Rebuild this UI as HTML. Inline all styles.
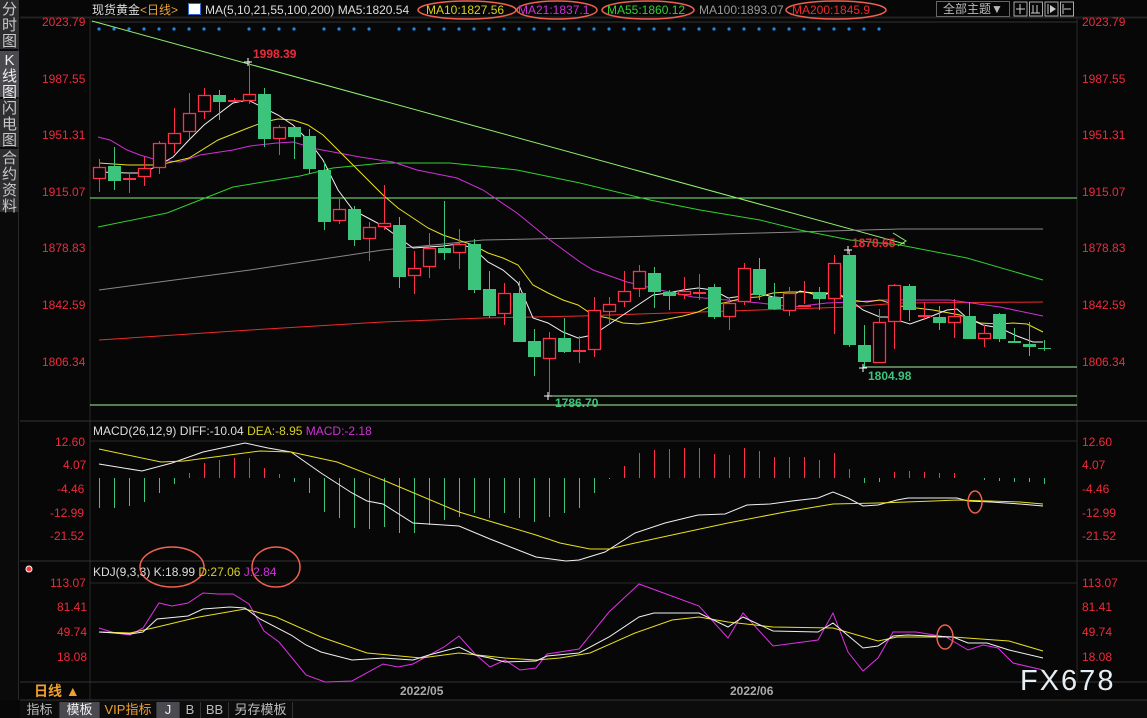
<!DOCTYPE html>
<html><head><meta charset="utf-8"><style>
*{margin:0;padding:0;box-sizing:border-box}
body{width:1147px;height:718px;background:#070707;overflow:hidden;position:relative;font-family:"Liberation Sans","Noto Sans CJK SC",sans-serif}
.side{position:absolute;left:0;top:0;width:19px;height:700px;background:#0a0a0a;border-right:1px solid #2a2a2a}
.seg{position:absolute;left:0;width:19px;background:#2e2e31;color:#c8c8c8;font-size:15px;line-height:16px;text-align:center;padding-top:2px}
.t{position:absolute;white-space:nowrap;font-size:12px;line-height:14px}
.ax{position:absolute;font-size:12px;color:#ee2a3c;line-height:14px}
.tab{position:absolute;top:702px;height:16px;font-size:13px;line-height:16px;color:#bbb;text-align:center;border-right:1px solid #333}
</style></head><body>
<div class="side">
<div class="seg" style="top:0;height:49px">分<br>时<br>图</div>
<div class="seg" style="top:51px;height:46px;background:#4a4a4e;color:#eee">K<br>线<br>图</div>
<div class="seg" style="top:99px;height:48px">闪<br>电<br>图</div>
<div class="seg" style="top:149px;height:63px">合<br>约<br>资<br>料</div>
</div>
<svg id="s" width="1147" height="718" style="position:absolute;left:0;top:0" xmlns="http://www.w3.org/2000/svg"></svg>

<div class="t" style="left:92px;top:3px;color:#ddd">现货黄金<span style="color:#e8a33a">&lt;日线&gt;</span></div>
<div class="t" style="left:188px;top:3px;width:13px;height:12px;background:#fff;border:1px solid #36c"></div>
<div class="t" style="left:205px;top:3px;color:#ddd">MA(5,10,21,55,100,200) MA5:1820.54</div>
<div class="t" style="left:426px;top:3px;color:#d8d020">MA10:1827.56</div>
<div class="t" style="left:518px;top:3px;color:#d030d8">MA21:1837.1</div>
<div class="t" style="left:607px;top:3px;color:#30d030">MA55:1860.12</div>
<div class="t" style="left:699px;top:3px;color:#999">MA100:1893.07</div>
<div class="t" style="left:792px;top:3px;color:#ee2a2a">MA200:1845.9</div>
<div class="t" style="left:936px;top:1px;width:74px;height:16px;border:1px solid #666;color:#bbb;text-align:center;line-height:14px">全部主题▼</div>

<div class="ax" style="left:1082px;top:15px">2023.79</div>
<div class="ax" style="left:1082px;top:72px">1987.55</div>
<div class="ax" style="left:1082px;top:128px">1951.31</div>
<div class="ax" style="left:1082px;top:185px">1915.07</div>
<div class="ax" style="left:1082px;top:241px">1878.83</div>
<div class="ax" style="left:1082px;top:298px">1842.59</div>
<div class="ax" style="left:1082px;top:355px">1806.34</div>
<div class="ax" style="left:42px;top:15px">2023.79</div>
<div class="ax" style="left:42px;top:72px">1987.55</div>
<div class="ax" style="left:42px;top:128px">1951.31</div>
<div class="ax" style="left:42px;top:185px">1915.07</div>
<div class="ax" style="left:42px;top:241px">1878.83</div>
<div class="ax" style="left:42px;top:298px">1842.59</div>
<div class="ax" style="left:42px;top:355px">1806.34</div>

<div class="ax" style="left:1082px;top:435px">12.60</div>
<div class="ax" style="left:1082px;top:458px">4.07</div>
<div class="ax" style="left:1082px;top:482px">-4.46</div>
<div class="ax" style="left:1082px;top:506px">-12.99</div>
<div class="ax" style="left:1082px;top:529px">-21.52</div>
<div class="ax" style="left:55px;top:435px">12.60</div>
<div class="ax" style="left:63px;top:458px">4.07</div>
<div class="ax" style="left:57px;top:482px">-4.46</div>
<div class="ax" style="left:50px;top:506px">-12.99</div>
<div class="ax" style="left:50px;top:529px">-21.52</div>

<div class="ax" style="left:1082px;top:576px">113.07</div>
<div class="ax" style="left:1082px;top:600px">81.41</div>
<div class="ax" style="left:1082px;top:625px">49.74</div>
<div class="ax" style="left:1082px;top:650px">18.08</div>
<div class="ax" style="left:50px;top:576px">113.07</div>
<div class="ax" style="left:57px;top:600px">81.41</div>
<div class="ax" style="left:57px;top:625px">49.74</div>
<div class="ax" style="left:57px;top:650px">18.08</div>

<div class="t" style="left:93px;top:424px;color:#ddd">MACD(26,12,9) DIFF:-10.04 <span style="color:#d8d020">DEA:-8.95</span> <span style="color:#d030d8">MACD:-2.18</span></div>
<div class="t" style="left:93px;top:565px;color:#ddd">KDJ(9,3,3) K:18.99 <span style="color:#d8d020">D:27.06</span> <span style="color:#d030d8">J:2.84</span></div>

<div class="t" style="left:253px;top:47px;color:#ee2a3c;font-weight:bold">1998.39</div>
<div class="t" style="left:852px;top:236px;color:#ee2a3c;font-weight:bold">1878.65</div>
<div class="t" style="left:868px;top:369px;color:#3cc47c;font-weight:bold">1804.98</div>
<div class="t" style="left:555px;top:396px;color:#3cc47c;font-weight:bold">1786.70</div>

<div class="t" style="left:400px;top:684px;color:#aaa;font-weight:bold">2022/05</div>
<div class="t" style="left:730px;top:684px;color:#aaa;font-weight:bold">2022/06</div>
<div class="t" style="left:34px;top:684px;color:#f0a030;font-size:14px;font-weight:bold">日线 ▲</div>
<div class="t" style="left:1020px;top:665px;color:#e6eef5;font-size:29px;line-height:32px;letter-spacing:2px">FX678</div>

<div class="tab" style="left:20px;width:40px">指标</div>
<div class="tab" style="left:60px;width:40px;background:#4a4a50;color:#eee">模板</div>
<div class="tab" style="left:100px;width:57px;color:#f0a030">VIP指标</div>
<div class="tab" style="left:157px;width:23px;background:#4a4a50;color:#eee">J</div>
<div class="tab" style="left:180px;width:21px">B</div>
<div class="tab" style="left:201px;width:28px">BB</div>
<div class="tab" style="left:229px;width:64px">另存模板</div>

<script>
var s=document.getElementById('s'),h='';
function L(x1,y1,x2,y2,c,w){h+='<line x1="'+x1+'" y1="'+y1+'" x2="'+x2+'" y2="'+y2+'" stroke="'+c+'" stroke-width="'+(w||1)+'"/>';}
function P(pts,c,w){h+='<polyline fill="none" stroke="'+c+'" stroke-width="'+(w||1)+'" points="'+pts+'"/>';}
h+='<rect x="20" y="700" width="1127" height="18" fill="#0c0c0c"/>';
L(90,18,90,700,'#2a2a2a');L(1077,18,1077,682,'#2a2a2a');
L(20,18,1147,18,'#222');L(20,421,1147,421,'#333');L(20,561,1147,561,'#333');L(20,682,1147,682,'#333');L(20,700,1147,700,'#333');L(20,17,1147,17,'#222');
L(90,22,1077,22,'#333');L(90,441,1077,441,'#2a2a2a');L(90,583,1077,583,'#2a2a2a');
for(var i=0;i<4;i++){h+='<rect x="'+(1014+i*15.5)+'" y="2" width="13" height="14" fill="none" stroke="#aaa"/>';}
L(1020,4,1020,14,'#ccc');L(1016,9,1025,9,'#ccc');L(1033,5,1033,13,'#ccc');L(1037,5,1037,13,'#ccc');L(1031,13,1040,13,'#ccc');
L(1048,4,1048,14,'#ccc');h+='<path d="M1050 5 L1056 9 L1050 13Z" fill="#ccc"/>';L(1063,4,1063,14,'#ccc');L(1064,9,1071,9,'#ccc');
for(var i=0;i<53;i++){var x=99+15*i;if(i==9||i==14||i==19)continue;h+='<circle cx="'+x+'" cy="29" r="1.6" fill="#1e88e5"/>';}
L(90,198,1077,198,'#7cf07c');L(863,367,1077,367,'#a8f0a0');L(548,396,1077,396,'#a8f0a0');L(90,405,1077,405,'#a8f0a0');
L(92,21,905,244,'#90f070');P('893,233 906,241 898,246','#90f070');
P('99,290 250,270 383,250 483,240 580,238 760,233 900,229 1043,229','#888');
P('99,340 250,330 383,322 483,318 580,316 700,312 850,307 900,303 1043,302','#ee2a2a');
P('98,227 167,213 233,187 300,176 333,168 383,163 450,163 517,170 580,183 650,200 700,210 760,220 800,230 850,240 900,245 967,258 1043,280','#30d030');
P('98,137 110,140 127,150 140,155 157,160 180,162 200,155 233,150 250,146 277,143 293,142 317,149 360,157 393,162 417,170 457,178 483,190 517,213 550,240 580,262 593,270 627,282 660,290 693,297 727,300 760,303 793,307 827,303 853,302 883,300 950,300 1000,307 1043,316','#d030d8');
P('99,163 128,165 159,165 189,158 218,140 248,128 264,122 278,119 293,120 308,125 323,135 338,150 353,165 368,180 383,195 398,208 413,218 428,228 443,235 458,240 473,245 488,253 503,258 518,265 533,285 548,293 563,300 578,305 593,315 608,318 623,323 638,324 653,322 668,319 683,316 698,312 713,305 728,302 743,298 758,297 773,293 788,292 803,292 818,293 833,293 850,300 867,302 880,300 900,306 933,310 960,315 980,323 1000,324 1013,323 1027,324 1043,332','#e8e020');
P('99,172 128,173 143,173 159,165 173,157 189,140 204,125 233,103 248,100 264,108 278,115 293,125 308,140 323,160 338,190 353,210 368,218 383,226 398,237 413,248 428,247 443,246 458,244 473,248 488,262 503,270 518,283 533,318 548,323 563,332 578,338 593,335 608,325 623,315 638,305 653,295 668,293 683,290 698,288 713,290 728,298 743,296 758,293 773,297 788,298 800,291 810,293 820,297 833,291 850,300 863,310 880,317 887,317 910,324 927,318 947,310 957,309 967,318 983,325 1000,328 1017,336 1033,342 1043,342','#f0f0f0');
var C=[['r',167,179,159,192],['g',166,181,147,190],['r',178,180,173,193],['r',168,177,157,186],['r',143,168,141,174],['r',133,144,108,153],['r',113,132,93,139],['r',95,112,88,119],['g',95,102,90,120],['r',100,102,98,102],['r',94,101,61,104],['g',94,139,88,147],
['r',127,139,125,155],['g',127,137,127,159],['g',136,169,129,174],['g',170,222,162,230],['r',209,221,199,224],['g',209,240,206,246],['r',227,239,222,261],['r',223,227,185,230],['g',225,277,217,288],['r',268,276,251,294],['r',248,267,233,278],['g',248,253,201,260],['r',244,253,229,269],['g',244,290,239,293],['g',289,316,271,318],['r',293,314,283,325],['g',293,342,281,342],['g',341,357,329,376],['r',338,359,332,395],['g',338,352,318,353],
['r',350,352,336,363],['r',310,350,297,357],['r',304,312,297,323],['r',291,302,271,307],['r',271,289,265,297],['g',273,292,267,308],['g',292,296,290,310],['r',291,295,277,299],['r',292,293,274,300],['g',287,317,284,319],['r',303,317,297,330],['r',268,302,263,305],['g',269,295,258,300],['g',297,309,283,310],['r',293,311,287,316],['r',305,307,281,304],['g',292,299,287,310],['r',263,299,255,334],['g',255,345,250,347],
['g',345,362,325,367],['r',322,363,309,363],['r',285,322,284,349],['g',286,310,284,321],['r',315,317,302,320],['g',317,323,306,330],['r',316,323,299,338],['g',316,339,302,339],['r',333,339,325,347],['g',314,339,313,342],['g',341,343,328,343],['g',344,347,322,356],['g',348,349,340,351]];
for(var i=0;i<C.length;i++){var c=C[i],x=99+15*i,col=c[0]=='r'?'#ff3048':'#3cc47c';
 L(x+0.5,c[3],x+0.5,c[4],col);
 var bh=Math.max(c[2]-c[1],1);
 if(c[0]=='r'){ if(bh<=2) h+='<rect x="'+(x-6)+'" y="'+c[1]+'" width="13" height="2" fill="'+col+'"/>'; else h+='<rect x="'+(x-5.5)+'" y="'+(c[1]+0.5)+'" width="12" height="'+(bh-1)+'" fill="#070707" stroke="'+col+'" stroke-width="1.3"/>';}
 else h+='<rect x="'+(x-6)+'" y="'+c[1]+'" width="13" height="'+bh+'" fill="'+col+'"/>';
}
function X(x,y){L(x-4,y,x+4,y,'#fff');L(x,y-4,x,y+4,'#fff');}
X(248,62);X(848,250);X(863,368);X(548,396);
var M=[508,508,506,502,493,484,473,463,460,458,458,468,474,482,493,512,518,528,529,527,533,533,525,520,517,513,518,513,518,522,517,513,508,493,479,466,453,450,449,448,448,454,455,448,451,457,457,457,460,453,469,483,482,472,471,472,473,473,478,480,481,482,482,484];
for(var i=0;i<M.length;i++){var x=99+15*i+0.5,y=M[i],col=y<478?'#ff3048':'#3cc47c';L(x,478,x,y,col);}
P('99,464 142,471 172,463 203,452 245,443 268,448 291,452 321,473 352,493 367,501 383,504 413,523 459,526 490,539 536,557 566,561 579,560 605,552 635,533 665,523 698,515 725,514 747,505 770,504 792,501 818,498 833,492 848,498 863,506 878,505 897,500 908,498 957,498 968,501 991,502 1020,504 1043,506','#f0f0f0');
P('99,449 161,462 184,461 260,451 291,452 337,462 383,480 459,512 536,535 560,543 590,549 609,549 635,543 672,535 728,523 785,512 833,504 878,503 934,501 957,500 1020,502 1043,504','#e8e020');
P('99,628 115,633 130,635 143,628 159,603 172,606 188,603 203,593 218,594 233,594 249,604 264,631 279,642 306,675 325,682 352,681 383,664 398,667 413,664 444,647 459,636 475,654 490,667 505,660 520,670 536,668 547,654 579,649 609,612 639,584 669,595 699,606 728,638 743,613 773,646 818,640 833,613 848,652 863,671 878,658 893,632 916,632 946,637 968,650 983,645 998,648 1013,663 1043,670','#e030e8');
P('99,632 130,633 153,628 199,617 245,609 276,617 321,637 367,653 421,658 459,653 505,658 536,660 560,658 590,653 635,633 672,620 699,617 728,622 773,627 833,628 878,641 897,637 953,637 1009,641 1043,651','#e8e020');
P('99,632 130,634 143,632 157,619 188,616 203,609 230,607 245,608 260,619 291,635 306,645 321,652 352,660 383,658 413,660 429,655 459,647 475,655 490,658 505,662 536,661 547,656 579,653 609,637 639,617 654,613 699,613 728,627 743,617 773,631 818,632 833,623 863,648 878,646 893,636 908,635 953,637 968,643 987,643 1009,650 1043,658','#f0f0f0');
function E(cx,cy,rx,ry){h+='<ellipse cx="'+cx+'" cy="'+cy+'" rx="'+rx+'" ry="'+ry+'" fill="none" stroke="#f06050" stroke-width="1.5"/>';}
E(467,10,49,9);E(557,10,40,9);E(648,10,46,9);E(836,10,50,9);E(172,567,32,20);E(276,567,24,20);E(975,502,7,11);E(945,637,8,12);
h+='<circle cx="29" cy="569" r="3" fill="#f33" stroke="#fff" stroke-width="1"/>';
s.innerHTML=h;
</script>
</body></html>
